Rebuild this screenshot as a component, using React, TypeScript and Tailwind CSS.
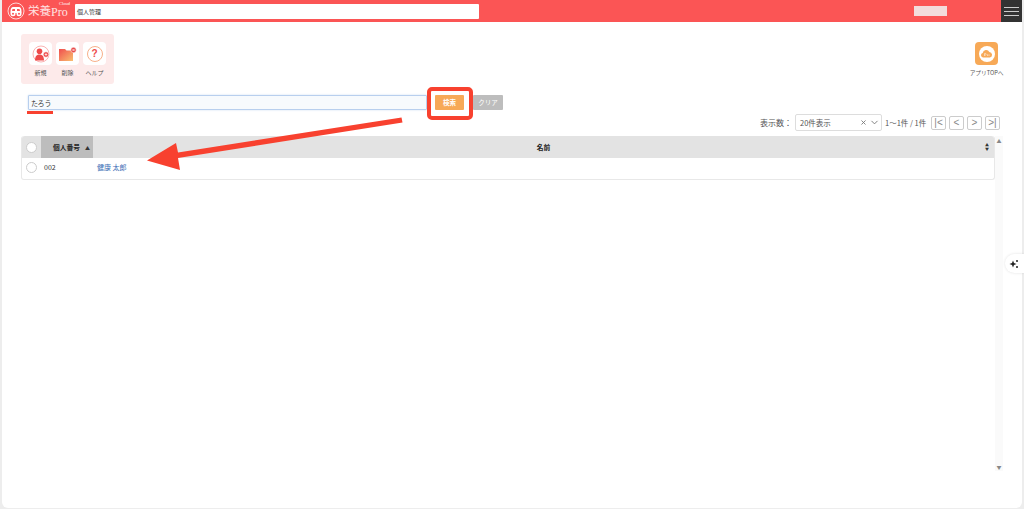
import { useState } from 'react';
import { ChevronDown, X } from 'lucide-react';

function ToolButton({ label, children }: { label: string; children: React.ReactNode }) {
  return (
    <div className="flex flex-col items-center w-[23px]">
      <div className="w-[23px] h-[23px] rounded-[4px] bg-white flex items-center justify-center">{children}</div>
      <span className="mt-[3px] text-[6px] leading-[9px] text-[#555] whitespace-nowrap">{label}</span>
    </div>
  );
}

function PagerButton({ label }: { label: string }) {
  return (
    <button className="w-[15px] h-[14px] border border-[#ccc] rounded-[2px] bg-white text-[#888] text-[10px] leading-none flex items-center justify-center font-['Liberation_Sans',sans-serif]">
      {label}
    </button>
  );
}

export default function App() {
  const [keyword, setKeyword] = useState('たろう');

  return (
    <div className="relative w-[1024px] h-[509px] overflow-hidden bg-[#ededed] px-[2px] pb-[1px] font-['Noto_Sans_CJK_JP','Noto_Sans',sans-serif]">
      <div className="h-full bg-white rounded-b-[6px] flex flex-col">
        {/* header */}
        <header className="h-[22px] shrink-0 bg-[#fb5555] flex items-center">
          <div className="ml-[5px] w-[66px] flex items-center">
            <svg width="18" height="18" viewBox="0 0 18 18" className="shrink-0">
              <circle cx="9" cy="9" r="8" fill="none" stroke="#ffd9d9" strokeWidth="1" />
              <path d="M3.500 9.500c0-3 1-4.500 2.500-4.500h6c1.500 0 2.500 1.500 2.500 4.500v1.500H3.500z" fill="#fff" />
              <circle cx="6" cy="11.800" r="2.500" fill="#fff" />
              <circle cx="12" cy="11.800" r="2.500" fill="#fff" />
              <path d="M5.500 7h2.500v2H5zM10 7h2.500l.5 2h-3z" fill="#fb5555" />
              <circle cx="6" cy="11.800" r="1" fill="#fb5555" />
              <circle cx="12" cy="11.800" r="1" fill="#fb5555" />
            </svg>
            <span className="ml-[3px] text-[11.500px] leading-none text-[#ffe3e3] whitespace-nowrap">栄養</span>
            <span className="relative text-[12px] leading-none pt-[2px] text-[#ffe3e3] font-['Liberation_Serif',serif]">
              Pro
              <span className="absolute left-[8px] -top-[2px] text-[4.500px] leading-none text-white">Cloud</span>
            </span>
          </div>
          <div className="ml-[2px] w-[404px] h-[15px] bg-white rounded-[1px] flex items-center pl-[2px] text-[6px] text-[#333]">個人管理</div>
          <div className="ml-[435px] w-[33px] h-[10px] bg-[#f3dcdc]" />
          <div className="ml-auto w-[21px] h-[22px] bg-[#333] flex flex-col items-center justify-center gap-[3px]">
            <div className="w-[15px] h-[1px] bg-[#ccc]" />
            <div className="w-[15px] h-[1px] bg-[#ccc]" />
            <div className="w-[15px] h-[1px] bg-[#ccc]" />
          </div>
        </header>

        {/* toolbar */}
        <div className="flex items-start justify-between pl-[19px] pt-[12px] pr-[19px]">
          <div className="w-[93px] h-[50px] rounded-[3px] bg-[#fdeaea] flex gap-[4px] pl-[8px] pt-[8px]">
            <ToolButton label="新規">
              <svg width="18" height="18" viewBox="0 0 18 18">
                <circle cx="9" cy="9" r="8" fill="none" stroke="#f9a0a0" strokeWidth="0.8" />
                <circle cx="7.500" cy="6.300" r="2.800" fill="#ee4b4b" />
                <path d="M3 15.500c0-4.500 2-6 4.500-6s4.500 1.500 4.500 6z" fill="#ee4b4b" />
                <circle cx="14" cy="9.500" r="2.800" fill="#ee4b4b" stroke="#fff" strokeWidth="0.6" />
                <path d="M12.700 9.500h2.600M14 8.200v2.600" stroke="#fff" strokeWidth="0.7" />
              </svg>
            </ToolButton>
            <ToolButton label="削除">
              <svg width="19" height="16" viewBox="0 0 19 16">
                <defs>
                  <linearGradient id="folder" x1="0" y1="0" x2="1" y2="1">
                    <stop offset="0" stopColor="#f04e4e" />
                    <stop offset="1" stopColor="#f9c070" />
                  </linearGradient>
                </defs>
                <path d="M1 3h6l1.500 1.500H15V15H1z" fill="url(#folder)" />
                <circle cx="15.500" cy="4" r="2.700" fill="#e84a4a" stroke="#fff" strokeWidth="0.5" />
                <path d="M14.500 3l2 2M16.500 3l-2 2" stroke="#fff" strokeWidth="0.7" />
              </svg>
            </ToolButton>
            <ToolButton label="ヘルプ">
              <div className="w-[16px] h-[16px] rounded-full border border-[#f8b08a] flex items-center justify-center text-[#ee4b4b] text-[10px] leading-none font-bold font-['Liberation_Sans',sans-serif]">?</div>
            </ToolButton>
          </div>
          <div className="flex flex-col items-center mt-[8px] -mr-[0.500px]">
            <div className="w-[23px] h-[23px] rounded-[4px] bg-[#f7a957] flex items-center justify-center">
              <div className="w-[16px] h-[16px] rounded-full bg-white flex items-center justify-center">
                <svg width="13" height="9" viewBox="0 0 13 9">
                  <path d="M3 8.500a2.300 2.300 0 0 1-.3-4.500A3.500 3.500 0 0 1 9.300 3a2.800 2.800 0 0 1 .7 5.500z" fill="#f7a957" />
                  <path d="M4.500 7V4.500h1.200a.8.8 0 0 1 0 1.500H4.500M7.500 7V5.300M9 7V5.300" fill="none" stroke="#fff" strokeWidth="0.5" />
                </svg>
              </div>
            </div>
            <span className="mt-[3px] text-[5.700px] leading-[9px] text-[#555] whitespace-nowrap">アプリTOPへ</span>
          </div>
        </div>

        {/* search */}
        <div className="flex items-center pl-[26px] mt-[11px] h-[15px]">
          <input
            value={keyword}
            onChange={(e) => setKeyword(e.target.value)}
            className="w-[399px] h-[15px] border border-[#b8cfee] shadow-[0_0_2px_#c5d8f0] bg-[#f7fafd] rounded-[1px] pl-[2px] text-[7px] text-[#333] outline-none"
          />
          <button className="ml-[8px] w-[29px] h-[15px] rounded-[1px] bg-[#f7a957] text-white text-[6.500px] font-bold">検索</button>
          <button className="ml-[9px] w-[30px] h-[15px] rounded-[1px] bg-[#bdbdbd] text-white text-[6.500px]">クリア</button>
        </div>

        {/* pager */}
        <div className="flex items-center justify-end gap-[3px] pr-[22px] mt-[4px] h-[17px] text-[7.500px] text-[#555]">
          <span className="text-[8px]">表示数：</span>
          <div className="w-[87px] h-[17px] border border-[#ddd] rounded-[2px] flex items-center pl-[4px] pr-[1px] text-[#555]">
            <span>20件表示</span>
            <X className="ml-auto w-[7px] h-[7px] text-[#777]" strokeWidth={3} />
            <ChevronDown className="ml-[2px] w-[11px] h-[11px] text-[#777]" strokeWidth={2} />
          </div>
          <span className="mr-[3px] w-[40px] whitespace-nowrap">1〜1件 / 1件</span>
          <PagerButton label="|<" />
          <PagerButton label="<" />
          <PagerButton label=">" />
          <PagerButton label=">|" />
        </div>

        {/* table */}
        <div className="flex flex-1 pl-[19px] pr-[19px] mt-[5px] pb-[37px] min-h-0">
          <div className="w-[974px] self-start border border-[#e8e8e8] border-t-0 rounded-[3px]">
            <div className="h-[22px] flex items-center bg-[#e3e3e3] rounded-t-[3px] text-[6.750px] font-bold text-[#222]">
              <div className="w-[19px] flex justify-center">
                <div className="w-[11px] h-[11px] rounded-full bg-white border border-[#ccc]" />
              </div>
              <div className="w-[52px] h-full bg-[#bdbdbd] flex items-center pl-[12px] pt-[1px]">
                <span>個人番号</span>
                <span className="ml-[5px] text-[5px] leading-none text-[#333]">▲</span>
              </div>
              <div className="flex-1 text-center pl-[14px] pt-[1px]">名前</div>
              <div className="w-[14px] text-[4px] leading-[4px] text-[#333] flex flex-col items-center">
                <span>▲</span>
                <span>▼</span>
              </div>
            </div>
            <div className="h-[21px] flex items-center pb-[2px] text-[7px] text-[#333]">
              <div className="w-[19px] flex justify-center">
                <div className="w-[11px] h-[11px] rounded-full bg-white border border-[#ccc]" />
              </div>
              <div className="w-[56px] pl-[3px]">002</div>
              <a className="text-[#3a6db5]">健康 太郎</a>
            </div>
          </div>
          <div className="w-[8px] bg-[#fafafa] flex flex-col items-center justify-between py-[2px] text-[5px] leading-none text-[#888]">
            <span>▲</span>
            <span>▼</span>
          </div>
        </div>
      </div>

      {/* floating button */}
      <div className="absolute right-0 top-[254px] w-[19px] h-[19px] rounded-l-full bg-white shadow-[0_0_3px_rgba(0,0,0,0.12)] flex items-center justify-center pr-[1px]">
        <svg width="10" height="10" viewBox="0 0 10 10" fill="#222">
          <path d="M4 1.500L5 4l2.500 1L5 6 4 8.500 3 6 .5 5 3 4z" />
          <circle cx="8" cy="2" r="1" />
          <circle cx="8" cy="8" r="1" />
        </svg>
      </div>

      {/* annotations */}
      <div className="absolute left-[427px] top-[87px] w-[46px] h-[33px] border-[4px] border-[#f8412f] rounded-[5px]" />
      <div className="absolute left-[27px] top-[111px] w-[26px] h-[3px] bg-[#f8412f]" />
      <svg className="absolute left-0 top-0 pointer-events-none" width="1024" height="509">
        <path d="M401.500 117.500L178 152.500L176 143L147 160.500L180 170L178 158L402.500 122.500z" fill="#f8412f" />
      </svg>
    </div>
  );
}
